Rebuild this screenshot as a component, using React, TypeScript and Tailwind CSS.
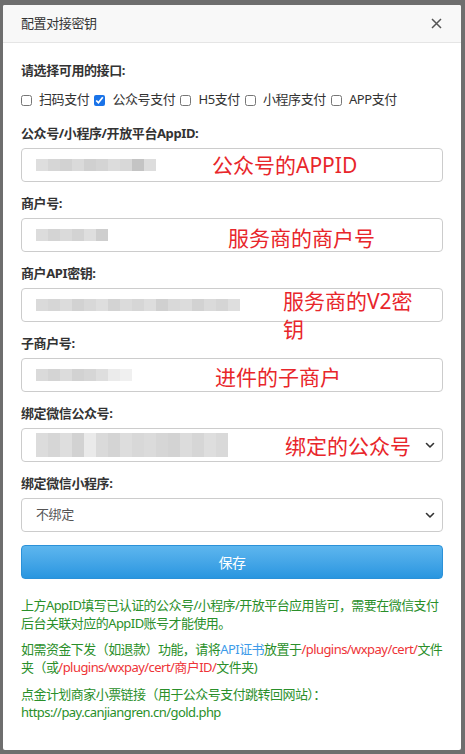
import React from "react";

const font = { fontFamily: '"Noto Sans", "Noto Sans CJK SC", sans-serif' };

// pixelated blur placeholder for hidden values
const Mosaic = ({ shades, rows = 1 }: { shades: string[]; rows?: number }) => {
    return (
        <div className="flex flex-col">
            {Array.from({ length: rows }).map((_, r) => (
                <div key={r} className="flex">
                    {shades.map((s, i) => (
                        <div key={i} className="w-3 h-3" style={{ backgroundColor: s }} />
                    ))}
                </div>
            ))}
        </div>
    );
};

const Chevron = () => (
    <svg width="10" height="7" viewBox="0 0 10 7" className="shrink-0">
        <path d="M1.5 1.5 L5 5 L8.5 1.5" fill="none" stroke="#333" strokeWidth="1.6" strokeLinecap="round" strokeLinejoin="round" />
    </svg>
);

const Note = ({ children, className = "" }: { children: React.ReactNode; className?: string }) => (
    <span className={`absolute text-[21px] leading-[28px] tracking-normal text-[#e8262b] whitespace-nowrap ${className}`}>{children}</span>
);

const Label = ({ children }: { children: React.ReactNode }) => (
    <div className="h-5 leading-5 text-[13px] font-bold text-[#333]">{children}</div>
);

const Option = ({ label, checked = false }: { label: string; checked?: boolean }) => (
    <label className="flex items-center mr-[5px]">
        <input type="checkbox" defaultChecked={checked} className="w-[11px] h-[11px] m-0 mr-[7px] accent-[#1a73e8]" />
        <span className="text-[13px] text-[#333]">{label}</span>
    </label>
);

export default function App() {
    return (
        <div className="w-[465px] h-[754px] bg-[#6e6e6e] pt-[5px] pl-[3px] pr-[4px] pb-[4px] tracking-[-0.4px]" style={font}>
            <div className="bg-white h-full rounded-[2px] flex flex-col overflow-hidden">
                <div className="h-[38px] shrink-0 bg-[#f8f8f8] border-b border-[#e5e5e5] flex items-center justify-between pl-[18px] pr-[19px]">
                    <span className="text-[13px] text-[#333]">配置对接密钥</span>
                    <svg width="11" height="11" viewBox="0 0 11 11">
                        <path d="M1 1 L10 10 M10 1 L1 10" stroke="#555" strokeWidth="1.5" />
                    </svg>
                </div>

                <div className="px-[18px] flex flex-col">
                    <div className="mt-[17px]">
                        <Label>请选择可用的接口:</Label>
                    </div>
                    <div className="mt-[10px] h-5 flex items-center">
                        <Option label="扫码支付" />
                        <Option label="公众号支付" checked />
                        <Option label="H5支付" />
                        <Option label="小程序支付" />
                        <Option label="APP支付" />
                    </div>

                    <div className="mt-[13px]">
                        <Label>公众号/小程序/开放平台AppID:</Label>
                        <div className="relative mt-[5px] h-[34px] border border-[#ccc] rounded-[4px] flex items-center pl-[14px]">
                            <Mosaic shades={["#dedede", "#d6d6d6", "#d2d2d2", "#dadada", "#d0d0d0", "#d4d4d4", "#dcdcdc", "#d8d8d8", "#c4c4c4", "#dddddd"]} />
                            <Note className="left-[190px] top-[2px] text-[20px]">公众号的APPID</Note>
                        </div>
                    </div>

                    <div className="mt-[11px]">
                        <Label>商户号:</Label>
                        <div className="relative mt-[5px] h-[34px] border border-[#ccc] rounded-[4px] flex items-center pl-[14px]">
                            <Mosaic shades={["#dcdcdc", "#d4d4d4", "#dadada", "#d3d3d3", "#dedede", "#cecece"]} />
                            <Note className="left-[206px] top-[5px]">服务商的商户号</Note>
                        </div>
                    </div>

                    <div className="mt-[11px]">
                        <Label>商户API密钥:</Label>
                        <div className="relative mt-[5px] h-[34px] border border-[#ccc] rounded-[4px] flex items-center pl-[14px]">
                            <Mosaic shades={["#dadada", "#d6d6d6", "#dcdcdc", "#d2d2d2", "#d8d8d8", "#dedede", "#d3d3d3", "#dbdbdb", "#d6d6d6", "#dddddd", "#d0d0d0", "#d9d9d9", "#dcdcdc", "#d2d2d2", "#dadada", "#d5d5d5", "#dedede"]} />
                            <span className="absolute left-[261px] top-[-2px] text-[21px] leading-[28px] tracking-normal text-[#e8262b]">
                                服务商的V2密<br />钥
                            </span>
                        </div>
                    </div>

                    <div className="mt-[11px]">
                        <Label>子商户号:</Label>
                        <div className="relative mt-[5px] h-[34px] border border-[#ccc] rounded-[4px] flex items-center pl-[14px]">
                            <Mosaic shades={["#dadada", "#d4d4d4", "#dcdcdc", "#d2d2d2", "#d6d6d6", "#dedede", "#ebebeb", "#f0f0f0"]} />
                            <Note className="left-[193px] top-[4px]">进件的子商户</Note>
                        </div>
                    </div>

                    <div className="mt-[11px]">
                        <Label>绑定微信公众号:</Label>
                        <div className="relative mt-[5px] h-[34px] border border-[#ccc] rounded-[4px] flex items-center justify-between pl-[14px] pr-[7px]">
                            <Mosaic rows={2} shades={["#dcdcdc", "#d6d6d6", "#dedede", "#d2d2d2", "#eaeaea", "#dadada", "#d4d4d4", "#dddddd", "#d8d8d8", "#dbdbdb", "#d6d6d6", "#d3d3d3", "#dcdcdc", "#d6d6d6", "#dedede", "#d9d9d9"]} />
                            <Note className="left-[263px] top-[3px]">绑定的公众号</Note>
                            <Chevron />
                        </div>
                    </div>

                    <div className="mt-[11px]">
                        <Label>绑定微信小程序:</Label>
                        <div className="relative mt-[5px] h-[34px] border border-[#ccc] rounded-[4px] flex items-center justify-between pl-[14px] pr-[7px]">
                            <span className="text-[13px] text-[#555]">不绑定</span>
                            <Chevron />
                        </div>
                    </div>

                    <button className="mt-[13px] h-[34px] rounded-[4px] border border-[#2b91d8] bg-gradient-to-b from-[#5db6ee] to-[#2896e0] text-white text-[14px]">
                        保存
                    </button>

                    <div className="mt-[17px] text-[13px] leading-[18px] text-[#2a8f2a] tracking-[-0.55px]">
                        <p className="whitespace-nowrap">上方AppID填写已认证的公众号/小程序/开放平台应用皆可，需要在微信支付</p>
                        <p className="whitespace-nowrap">后台关联对应的AppID账号才能使用。</p>

                        <p className="whitespace-nowrap mt-2">
                            如需资金下发（如退款）功能，请将<span className="text-[#3d9be9]">API证书</span>放置于<span className="text-[#ee3438]">/plugins/wxpay/cert/</span>文件
                        </p>
                        <p className="whitespace-nowrap">
                            夹（或<span className="text-[#ee3438]">/plugins/wxpay/cert/商户ID/</span>文件夹)
                        </p>

                        <p className="whitespace-nowrap mt-[9px]">点金计划商家小票链接（用于公众号支付跳转回网站）：</p>
                        <p className="whitespace-nowrap">https://pay.canjiangren.cn/gold.php</p>
                    </div>
                </div>
            </div>
        </div>
    );
}
